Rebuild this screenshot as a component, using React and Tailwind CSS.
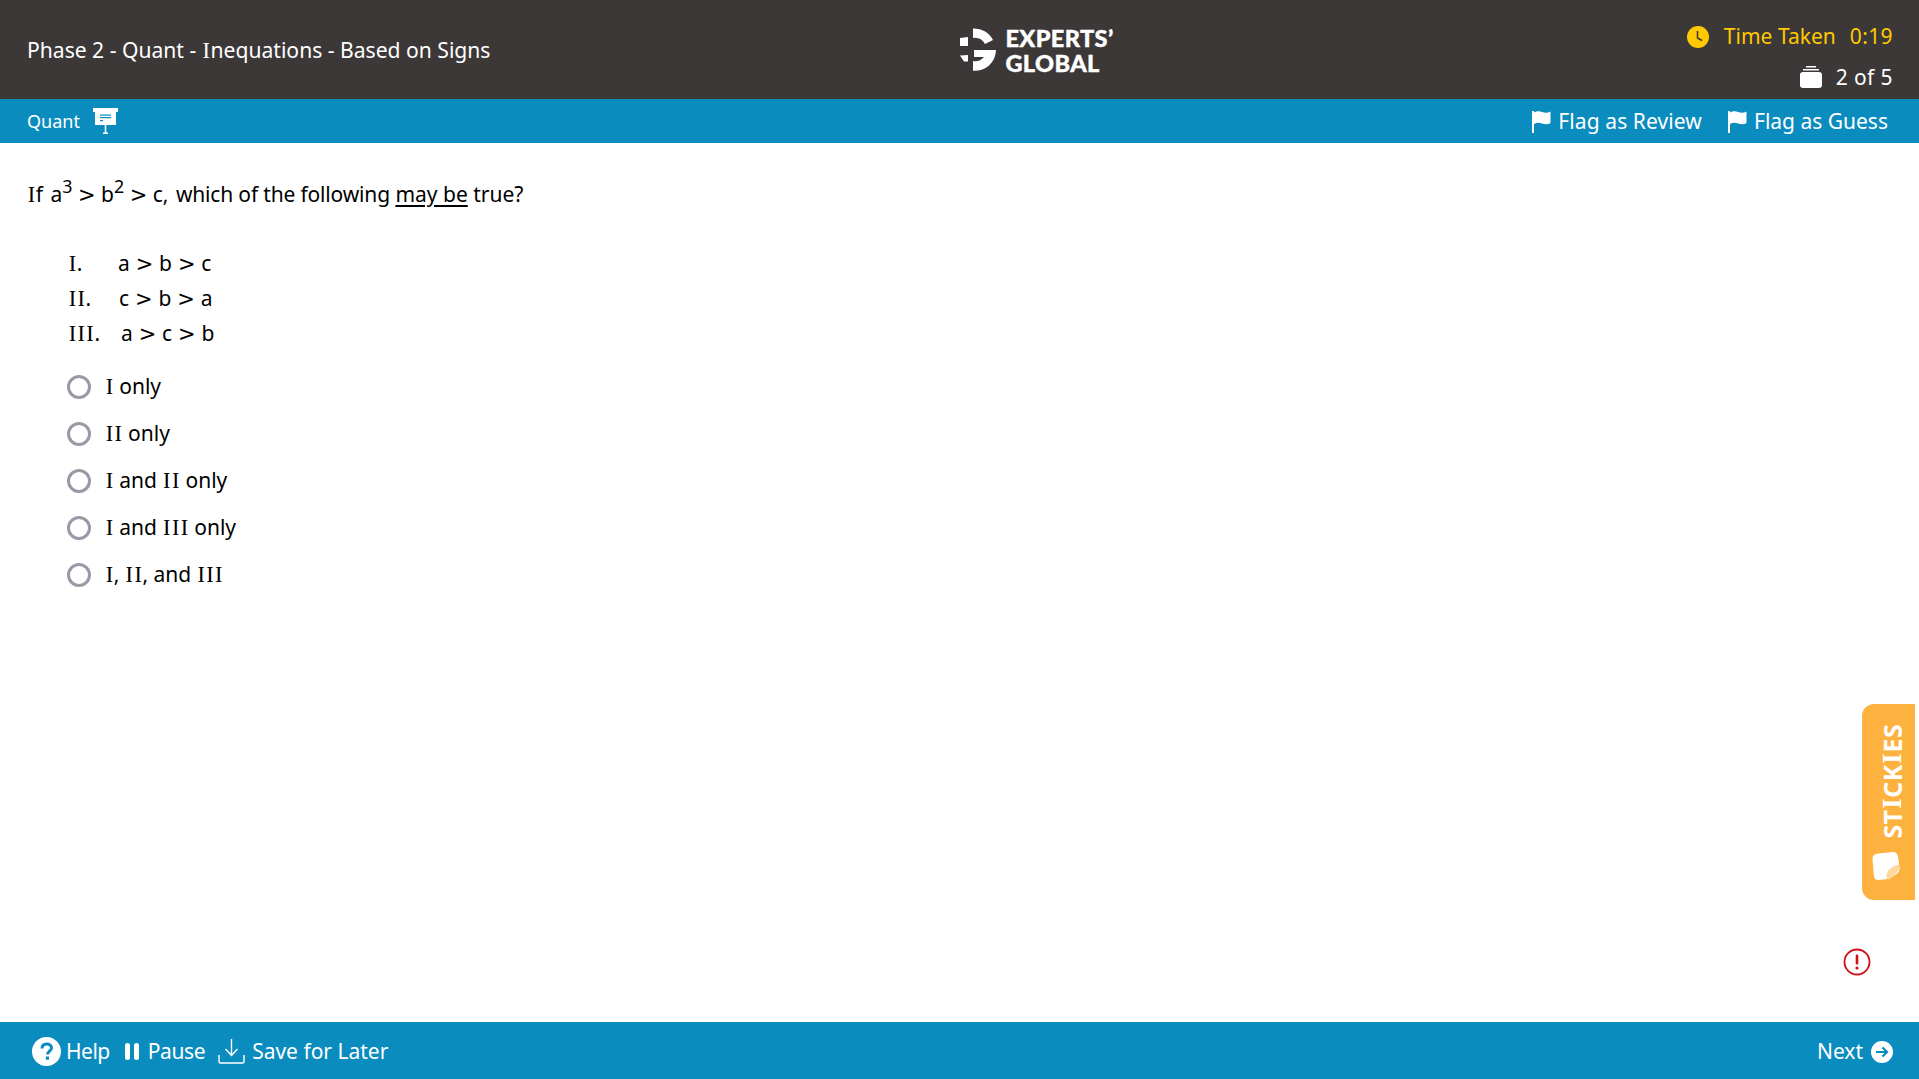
import React from "react";

const I = ({ children }) => {
  const parts = String(children).split(/(I)/);
  return (
    <>
      {parts.map((p, i) =>
        p === "I" ? (
          <span key={i} className="px-[0.7px] font-['Liberation_Serif',serif] text-[1.06em] leading-none">I</span>
        ) : (
          <span key={i}>{p}</span>
        )
      )}
    </>
  );
};

const Gt = () => <span className="font-['DejaVu_Sans',sans-serif]">&gt;</span>;

const Flag = () => (
  <svg width="19" height="23" viewBox="0 0 19 23" fill="none">
    <rect x="0" y="1" width="2" height="22" fill="#fff" />
    <path d="M2 2.5C5 0.5 8 1 10 2C13 3 16 3 18.5 1.5V13C16 14.5 13 14.5 10 13.5C7 12.5 5 12.5 2 14Z" fill="#fff" />
  </svg>
);

const options = ["I only", "II only", "I and II only", "I and III only", "I, II, and III"];

export default function App() {
  return (
    <div className="relative flex h-screen w-full flex-col overflow-hidden bg-white font-['Noto_Sans',sans-serif] text-[21px] text-black">
      <header className="flex h-[99px] shrink-0 items-center justify-between bg-[#3c3838] pl-[27px] pr-[26px] text-white">
        <div className="w-[600px] pt-[1px] text-[21.1px]"><I>Phase 2 - Quant - Inequations - Based on Signs</I></div>
        <div className="ml-[152px] mt-[3px] flex items-center gap-[7px]">
          <svg width="40" height="50" viewBox="0 0 40 50" fill="#fff">
            <path d="M15 2.5A21 21 0 0 1 35 14L27 18A12 12 0 0 0 15 12Z" />
            <path d="M16 24H38A21 21 0 0 1 15 44.7V35A12 12 0 0 0 26 31H16Z" />
            <path d="M2 12L10 11V20H2Z" />
            <path d="M2 29.5L10 29V35.5H6Z" />
          </svg>
          <div className="font-['Lato',sans-serif] text-[23.5px] font-black leading-[25px] tracking-[0.4px] [-webkit-text-stroke:0.4px_white]">
            <div>EXPERTS’</div>
            <div>GLOBAL</div>
          </div>
        </div>
        <div className="flex w-[600px] flex-col items-end gap-[9px] pt-[15px]">
          <div className="flex items-center text-[#ffc800]">
            <svg width="22" height="22" viewBox="0 0 22 22" className="mr-[15px]">
              <circle cx="11" cy="11" r="11" fill="#ffc800" />
              <path d="M10.5 5V12L15 14.5" stroke="#3c3838" strokeWidth="1.5" fill="none" />
            </svg>
            <span>Time Taken</span>
            <span className="ml-[14px] tracking-[0.4px]">0:19</span>
          </div>
          <div className="flex items-center">
            <svg width="22" height="22" viewBox="0 0 22 22" fill="#fff" className="mr-[14px]">
              <rect x="6" y="0" width="10" height="1.5" />
              <rect x="3" y="3" width="16" height="1.5" />
              <rect x="0" y="6" width="22" height="16" rx="3" />
            </svg>
            <span className="tracking-[0.4px]">2 of 5</span>
          </div>
        </div>
      </header>

      <div className="flex h-[44px] shrink-0 items-center justify-between bg-[#0b8cbf] pl-[27px] pr-[31px] text-white">
        <div className="flex items-center gap-[13px] text-[18px]">
          <span>Quant</span>
          <svg width="25" height="26" viewBox="0 0 25 26" fill="#fff">
            <rect x="0" y="0" width="25" height="4" />
            <rect x="2" y="4" width="21" height="13" />
            <rect x="7" y="6.5" width="11" height="1.2" fill="#0b8cbf" />
            <rect x="7" y="9" width="11" height="1.2" fill="#0b8cbf" />
            <rect x="7" y="12" width="3" height="1.2" fill="#0b8cbf" />
            <rect x="11.7" y="17" width="1.6" height="8" />
            <rect x="10" y="24.5" width="5" height="1.5" />
          </svg>
        </div>
        <div className="flex items-center gap-[26px] pt-[1px]">
          <div className="flex items-center gap-[7px]"><Flag /><span className="tracking-[0.1px]">Flag as Review</span></div>
          <div className="flex items-center gap-[7px]"><Flag /><span>Flag as Guess</span></div>
        </div>
      </div>

      <main className="flex-1 pl-[27px] pt-[35px]">
        <p className="leading-[32px]">
          <span className="mr-[2px]"><I>If</I></span> a<sup className="text-[0.85em]">3</sup> <Gt /> b<sup className="text-[0.85em]">2</sup> <Gt /> <span className="mr-[2px]">c,</span> <span className="tracking-[-0.16px]">which of the following</span> <span className="underline underline-offset-[3px]">may be</span> true?
        </p>
        <div className="ml-[41px] mt-[38px] flex flex-col gap-[5.5px] leading-[28.5px]">
          <div className="flex"><span className="w-[50px]"><I>I.</I></span><span className="tracking-[0.2px]">a <Gt /> b <Gt /> c</span></div>
          <div className="flex"><span className="w-[51px]"><I>II.</I></span><span className="tracking-[0.2px]">c <Gt /> b <Gt /> a</span></div>
          <div className="flex"><span className="w-[53px]"><I>III.</I></span><span className="tracking-[0.2px]">a <Gt /> c <Gt /> b</span></div>
        </div>
        <div className="ml-[40px] mt-[24px] flex flex-col gap-[18px]">
          {options.map((o) => (
            <label key={o} className="flex h-[29px] items-center">
              <span className="h-[24px] w-[24px] rounded-full border-[3px] border-[#9a99a5]" />
              <span className="ml-[14px]"><I>{o}</I></span>
            </label>
          ))}
        </div>
      </main>

      <footer className="flex h-[57px] shrink-0 items-center justify-between bg-[#0b8cbf] pl-[32px] pr-[26px] pt-[2px] text-white">
        <div className="flex items-center">
          <svg width="29" height="29" viewBox="0 0 29 29" className="mr-[5px]">
            <circle cx="14.5" cy="14.5" r="14.5" fill="#fff" />
            <path d="M10 11.5C10 8.5 12 7 14.7 7C17.5 7 19.5 8.6 19.5 11C19.5 14 15.5 14.3 15.5 17.5" stroke="#0b8cbf" strokeWidth="3" fill="none" />
            <rect x="13.8" y="19.5" width="3.2" height="3.2" fill="#0b8cbf" />
          </svg>
          <span className="tracking-[-0.5px]">Help</span>
          <svg width="15" height="17" viewBox="0 0 15 17" fill="#fff" className="ml-[15px] mr-[8px]">
            <rect x="0" y="0" width="5" height="17" rx="2.5" />
            <rect x="9" y="0" width="5" height="17" rx="2.5" />
          </svg>
          <span className="tracking-[-0.4px]">Pause</span>
          <svg width="27" height="25" viewBox="0 0 27 25" fill="none" stroke="#fff" strokeWidth="1.4" className="ml-[13px] mr-[7px]">
            <path d="M13.5 0V16M7.5 10L13.5 16.5L19.5 10" />
            <path d="M1 16V22.5Q1 24 2.5 24H24.5Q26 24 26 22.5V16" />
          </svg>
          <span>Save for Later</span>
        </div>
        <div className="flex items-center gap-[8px]">
          <span>Next</span>
          <svg width="22" height="22" viewBox="0 0 22 22">
            <circle cx="11" cy="11" r="11" fill="#fff" />
            <path d="M5 11H16M11.5 6.5L16 11L11.5 15.5" stroke="#0b8cbf" strokeWidth="2.2" fill="none" />
          </svg>
        </div>
      </footer>

      <div className="absolute right-[4px] top-[704px] flex h-[196px] w-[53px] flex-col items-center justify-between rounded-l-[12px] bg-[#fdb23f] pb-[20px] pt-[20px] text-white">
        <span className="ml-[7px] rotate-180 text-[25px] font-bold leading-none tracking-[0.3px] [writing-mode:vertical-rl]"><I>STICKIES</I></span>
        <svg width="28" height="28" viewBox="0 0 30 30" className="mr-[5px]">
          <path d="M5 2L22 0Q27 0 28 5L29.5 17Q30 20 27 23L21 27Q19 29 17 29L7 30Q2 30 2 25L0.5 7Q0.5 3 5 2Z" fill="#fff" />
          <path d="M16 29Q13 18 29 13L30 18L22 27Z" fill="#fdd9a0" />
        </svg>
      </div>

      <svg width="28" height="28" viewBox="0 0 28 28" className="absolute left-[1843px] top-[948px]">
        <circle cx="14" cy="14" r="12.5" fill="none" stroke="#cc1016" strokeWidth="1.8" />
        <rect x="12.7" y="6.5" width="2.6" height="10" rx="1.2" fill="#cc1016" />
        <circle cx="14" cy="20" r="1.6" fill="#cc1016" />
      </svg>
    </div>
  );
}
